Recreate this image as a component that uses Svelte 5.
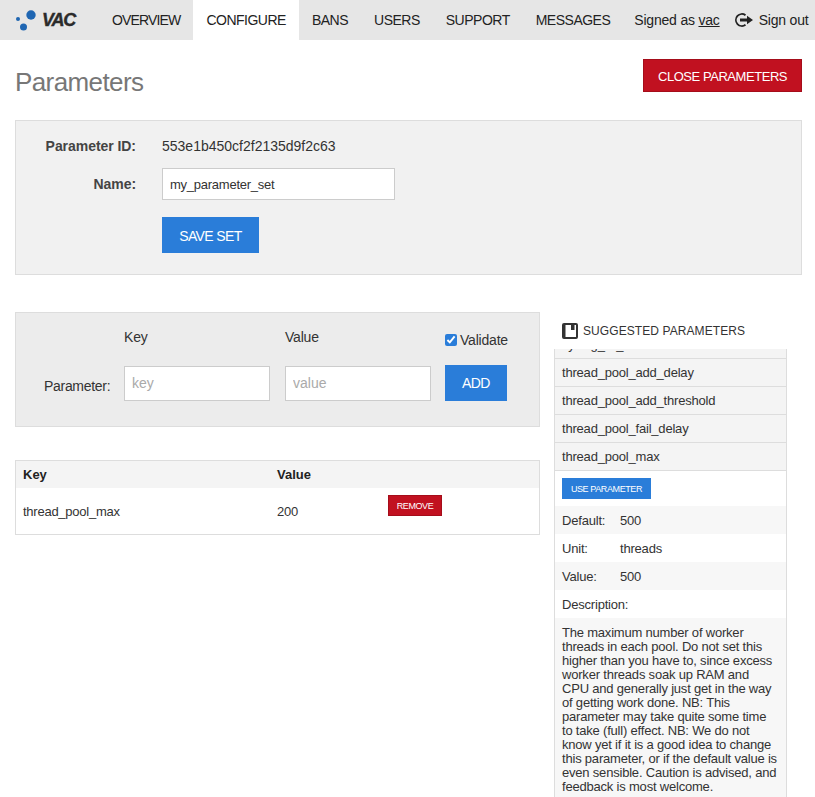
<script>
  const navItems = ['OVERVIEW', 'CONFIGURE', 'BANS', 'USERS', 'SUPPORT', 'MESSAGES'];
  const suggestions = ['syslog_cli_buffer', 'thread_pool_add_delay', 'thread_pool_add_threshold', 'thread_pool_fail_delay', 'thread_pool_max'];
  const details = [
    ['Default:', '500'],
    ['Unit:', 'threads'],
    ['Value:', '500'],
    ['Description:', '']
  ];
  const description = 'The maximum number of worker threads in each pool. Do not set this higher than you have to, since excess worker threads soak up RAM and CPU and generally just get in the way of getting work done. NB: This parameter may take quite some time to take (full) effect. NB: We do not know yet if it is a good idea to change this parameter, or if the default value is even sensible. Caution is advised, and feedback is most welcome.';
</script>

<header class="topbar">
  <div class="logo">
    <svg width="24" height="24" viewBox="0 0 24 24">
      <circle cx="3" cy="11" r="2" fill="#1f66b2" />
      <circle cx="16" cy="7" r="4.7" fill="#1f66b2" />
      <circle cx="8.5" cy="19" r="3.5" fill="#1f66b2" />
    </svg>
    <span class="logo-text">VAC</span>
  </div>
  <nav class="nav">
    {#each navItems as item}
      <a class="nav-item" class:active={item === 'CONFIGURE'} href="#top">{item}</a>
    {/each}
  </nav>
  <div class="account">
    <span>Signed as <u>vac</u></span>
    <svg class="signout-icon" width="20" height="16" viewBox="0 0 20 16">
      <path d="M11.5 3.2 A6 6 0 1 0 11.5 12.8" fill="none" stroke="#222" stroke-width="1.8" />
      <path d="M6 6.5 H13 V3.8 L19 8 L13 12.2 V9.5 H6 Z" fill="#222" />
    </svg>
    <span>Sign out</span>
  </div>
</header>

<main class="page">
  <div class="title-row">
    <h1>Parameters</h1>
    <button class="btn danger close">CLOSE PARAMETERS</button>
  </div>

  <section class="panel set-panel">
    <div class="set-row id-row">
      <span class="set-label">Parameter ID:</span>
      <span>553e1b450cf2f2135d9f2c63</span>
    </div>
    <div class="set-row name-row">
      <span class="set-label">Name:</span>
      <input class="input name-input" value="my_parameter_set" />
    </div>
    <div class="set-row save-row">
      <span class="set-label"></span>
      <button class="btn primary save">SAVE SET</button>
    </div>
  </section>

  <div class="columns">
    <div class="left">
      <section class="panel add-panel">
        <span class="add-label">Parameter:</span>
        <label class="field">
          <span>Key</span>
          <input class="input" placeholder="key" />
        </label>
        <label class="field">
          <span>Value</span>
          <input class="input" placeholder="value" />
        </label>
        <div class="field add-field">
          <label class="validate"><input type="checkbox" checked /> Validate</label>
          <button class="btn primary add">ADD</button>
        </div>
      </section>

      <table class="param-table">
        <thead>
          <tr><th class="col-key">Key</th><th class="col-value">Value</th><th></th></tr>
        </thead>
        <tbody>
          <tr>
            <td>thread_pool_max</td>
            <td>200</td>
            <td class="action"><button class="btn danger remove">REMOVE</button></td>
          </tr>
        </tbody>
      </table>
    </div>

    <aside class="side">
      <h2>
        <svg width="16" height="16" viewBox="0 0 16 16">
          <rect x="1" y="1" width="14" height="14" rx="1" fill="none" stroke="#333" stroke-width="2" />
          <path d="M9 1 H12.5 V7 H9 Z M1 1 H3.5 V15 H1 Z" fill="#333" />
        </svg>
        SUGGESTED PARAMETERS
      </h2>
      <div class="list">
        <ul class="suggestions">
          {#each suggestions as name}
            <li>{name}</li>
          {/each}
        </ul>
        <div class="use-row"><button class="btn primary use">USE PARAMETER</button></div>
        {#each details as [label, value], i}
          <div class="detail" class:odd={i % 2 === 0}>
            <span class="detail-label">{label}</span>
            <span>{value}</span>
          </div>
        {/each}
        <p class="description">{description}</p>
      </div>
    </aside>
  </div>
</main>

<style>
  :global(html), :global(body) {
    margin: 0;
    height: 797px;
    overflow: hidden;
    background: #fff;
  }

  :global(body) {
    font-family: "Liberation Sans", Arial, sans-serif;
    font-size: 13px;
    color: #333;
  }

  .topbar {
    display: flex;
    align-items: center;
    height: 40px;
    background: #e6e6e6;
    color: #222;
  }

  .logo {
    display: flex;
    align-items: center;
    width: 112px;
    flex: none;
    padding-left: 15px;
    box-sizing: border-box;
    gap: 3px;
  }

  .logo-text {
    font-size: 18px;
    font-weight: 700;
    font-style: italic;
    letter-spacing: -1.2px;
    color: #2b2b2b;
    -webkit-text-stroke: 0.4px #2b2b2b;
  }

  .nav {
    display: flex;
    height: 100%;
    margin-left: -13px;
  }

  .nav-item {
    display: flex;
    align-items: center;
    padding: 0 13px;
    font-size: 14px;
    letter-spacing: -0.5px;
    color: #222;
    text-decoration: none;
  }

  .nav-item:first-child {
    letter-spacing: -0.85px;
  }

  .nav-item.active {
    background: #fff;
  }

  .account {
    display: flex;
    align-items: center;
    margin-left: 11px;
    font-size: 14px;
    letter-spacing: -0.2px;
    white-space: nowrap;
  }

  .signout-icon {
    margin: 0 5px 0 14px;
  }

  .page {
    padding: 0 13px 0 15px;
  }

  .title-row {
    display: flex;
    justify-content: space-between;
    height: 80px;
  }

  h1 {
    margin: 27px 0 0;
    font-size: 26px;
    line-height: 30px;
    font-weight: 400;
    letter-spacing: -0.6px;
    color: #777;
  }

  .btn {
    border: 1px solid transparent;
    border-radius: 0;
    font-family: inherit;
    color: #fff;
    padding: 0;
  }

  .primary {
    background: #2a7dd9;
    letter-spacing: -0.6px;
  }

  .danger {
    background: #c11120;
    border-color: #a50d1a;
  }

  .close {
    width: 159px;
    height: 33px;
    margin-top: 19px;
    padding-top: 1px;
    font-size: 13px;
    letter-spacing: -0.45px;
  }

  .panel {
    background: #f1f1f1;
    border: 1px solid #ddd;
    box-sizing: border-box;
  }

  .set-panel {
    height: 155px;
    padding-top: 15px;
  }

  .set-row {
    display: flex;
    align-items: center;
  }

  .id-row {
    font-size: 14px;
    height: 20px;
    margin-bottom: 12px;
    color: #333;
  }

  .name-row {
    font-size: 14px;
  }

  .save-row {
    margin-top: 17px;
  }

  .set-label {
    width: 120px;
    margin-right: 26px;
    text-align: right;
    font-weight: 700;
    font-size: 14px;
    letter-spacing: -0.05px;
    color: #444;
  }

  .input {
    box-sizing: border-box;
    width: 146px;
    height: 35px;
    border: 1px solid #ccc;
    border-radius: 0;
    background: #fff;
    padding: 0 7px;
    margin: 0;
    font-family: inherit;
    font-size: 13px;
    color: #333;
    outline: none;
  }

  .input::placeholder {
    color: #aaa;
    opacity: 1;
    font-size: 14px;
  }

  .name-input {
    width: 233px;
    height: 32px;
    font-size: 13px;
    letter-spacing: -0.25px;
  }

  .save {
    width: 97px;
    height: 36px;
    padding-top: 1px;
    font-size: 14px;
  }

  .columns {
    display: flex;
    margin-top: 37px;
  }

  .left {
    width: 525px;
    flex: none;
  }

  .add-panel {
    display: flex;
    align-items: flex-end;
    height: 115px;
    background: #ececec;
    padding: 0 0 25px 28px;
    font-size: 14px;
  }

  .add-label {
    width: 80px;
    height: 23px;
    letter-spacing: -0.3px;
  }

  .field {
    display: flex;
    flex-direction: column;
    gap: 21px;
    margin-right: 15px;
    font-size: 14px;
    letter-spacing: -0.2px;
  }

  .add-field {
    margin-right: 0;
    margin-left: -1px;
    gap: 17px;
  }

  .validate {
    display: flex;
    align-items: center;
    gap: 3px;
  }

  .validate input {
    margin: 0;
    width: 12px;
    height: 12px;
    accent-color: #2a7dd9;
  }

  .add {
    width: 62px;
    height: 36px;
    font-size: 14px;
  }

  .param-table {
    margin-top: 33px;
    width: 525px;
    border: 1px solid #ddd;
    border-collapse: collapse;
    table-layout: fixed;
    font-size: 13px;
  }

  th {
    background: #f4f4f4;
    height: 27px;
    padding: 0 7px;
    text-align: left;
    color: #222;
    font-size: 13px;
  }

  .col-key {
    width: 240px;
  }

  .col-value {
    width: 97px;
  }

  td {
    box-sizing: border-box;
    height: 46px;
    padding: 1px 7px 0;
    color: #333;
    letter-spacing: -0.25px;
  }

  .action {
    vertical-align: top;
    padding-top: 7px;
  }

  .remove {
    display: block;
    width: 54px;
    height: 21px;
    font-size: 9px;
    letter-spacing: -0.4px;
  }

  .side {
    width: 233px;
    margin-left: 14px;
    flex: none;
  }

  h2 {
    display: flex;
    align-items: center;
    gap: 5px;
    margin: 0;
    height: 37px;
    padding-left: 8px;
    font-size: 12px;
    font-weight: 400;
    letter-spacing: 0.08px;
    color: #333;
    box-sizing: border-box;
  }

  .list {
    height: 448px;
    overflow: hidden;
    border-left: 1px solid #ddd;
    border-right: 1px solid #ddd;
    font-size: 13px;
    letter-spacing: -0.2px;
  }

  .suggestions {
    list-style: none;
    margin: -18px 0 0;
    padding: 0;
  }

  .suggestions li {
    height: 27px;
    line-height: 27px;
    padding-left: 7px;
    background: #f4f4f4;
    border-bottom: 1px solid #ddd;
  }

  .use-row {
    height: 35px;
    padding: 7px 7px 0;
    box-sizing: border-box;
  }

  .use {
    display: block;
    width: 89px;
    height: 21px;
    font-size: 9px;
    letter-spacing: -0.4px;
    border: none;
  }

  .detail {
    display: flex;
    align-items: center;
    height: 28px;
    padding-left: 7px;
  }

  .detail.odd {
    background: #f7f7f7;
  }

  .detail-label {
    width: 58px;
  }

  .description {
    margin: 0;
    padding: 8px 7px;
    background: #f7f7f7;
    font-size: 13px;
    line-height: 14px;
  }
</style>
